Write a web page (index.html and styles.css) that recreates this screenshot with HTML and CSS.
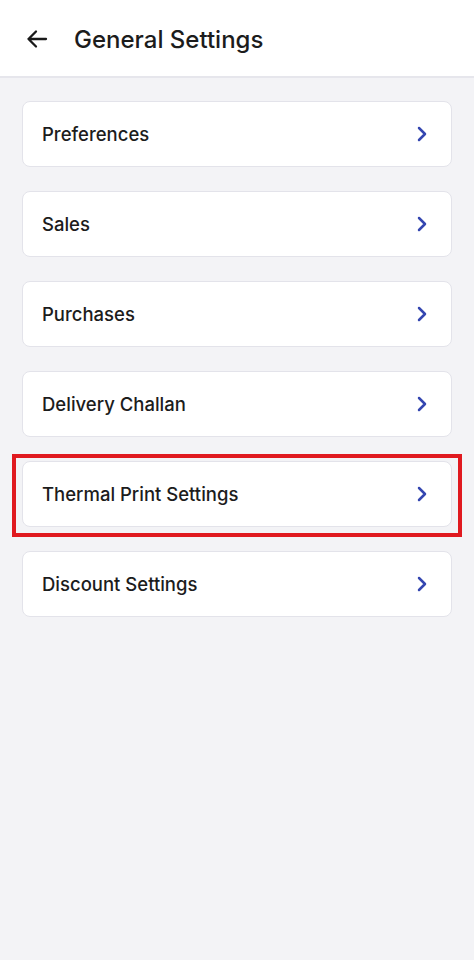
FILE: index.html
```html
<!DOCTYPE html>
<html>
<head>
<meta charset="utf-8">
<link rel="stylesheet" href="styles.css">
</head>
<body>
<header class="topbar">
  <svg class="back" width="24" height="24" viewBox="0 0 24 24"><path d="M21 12H3.5M11 4.5L3.5 12L11 19.5" fill="none" stroke="#1a1a1a" stroke-width="2.3" stroke-linecap="round" stroke-linejoin="round"/></svg>
  <h1 class="title">General Settings</h1>
</header>
<main class="list">
  <div class="item"><span>Preferences</span><svg class="chev" width="14" height="18" viewBox="0 0 14 18"><path d="M4 3L10 9L4 15" fill="none" stroke="#3446b0" stroke-width="2.5" stroke-linecap="round" stroke-linejoin="round"/></svg></div>
  <div class="item"><span>Sales</span><svg class="chev" width="14" height="18" viewBox="0 0 14 18"><path d="M4 3L10 9L4 15" fill="none" stroke="#3446b0" stroke-width="2.5" stroke-linecap="round" stroke-linejoin="round"/></svg></div>
  <div class="item"><span>Purchases</span><svg class="chev" width="14" height="18" viewBox="0 0 14 18"><path d="M4 3L10 9L4 15" fill="none" stroke="#3446b0" stroke-width="2.5" stroke-linecap="round" stroke-linejoin="round"/></svg></div>
  <div class="item"><span>Delivery Challan</span><svg class="chev" width="14" height="18" viewBox="0 0 14 18"><path d="M4 3L10 9L4 15" fill="none" stroke="#3446b0" stroke-width="2.5" stroke-linecap="round" stroke-linejoin="round"/></svg></div>
  <div class="item highlighted"><span>Thermal Print Settings</span><svg class="chev" width="14" height="18" viewBox="0 0 14 18"><path d="M4 3L10 9L4 15" fill="none" stroke="#3446b0" stroke-width="2.5" stroke-linecap="round" stroke-linejoin="round"/></svg></div>
  <div class="item"><span>Discount Settings</span><svg class="chev" width="14" height="18" viewBox="0 0 14 18"><path d="M4 3L10 9L4 15" fill="none" stroke="#3446b0" stroke-width="2.5" stroke-linecap="round" stroke-linejoin="round"/></svg></div>
</main>
</body>
</html>
```
FILE: styles.css
```css
html, body {
  margin: 0;
  padding: 0;
  background: #f3f3f6;
  font-family: Inter, "Noto Sans", sans-serif;
}
body {
  min-height: 960px;
}
.topbar {
  background: #ffffff;
  border-bottom: 2px solid #e6e6ec;
  display: flex;
  align-items: center;
  padding: 2px 0 0 25px;
  box-sizing: border-box;
  height: 78px;
}
.back {
  display: block;
  margin-right: 25px;
}
.title {
  margin: 0;
  font-size: 24px;
  font-weight: 500;
  color: #1c1c1c;
}
.list {
  display: flex;
  flex-direction: column;
  gap: 24px;
  padding: 23px 22px 0 22px;
}
.item {
  position: relative;
  height: 66px;
  background: #ffffff;
  border: 1px solid #e3e3ea;
  border-radius: 8px;
  box-sizing: border-box;
  display: flex;
  align-items: center;
  justify-content: space-between;
  padding: 0 22px 0 19px;
  font-size: 18.5px;
  font-weight: 500;
  color: #1c1c1c;
}
.chev {
  display: block;
}
.highlighted::after {
  content: "";
  position: absolute;
  left: -11px;
  right: -11px;
  top: -8px;
  bottom: -11px;
  border: 4px solid #e0191f;
  pointer-events: none;
}
```
